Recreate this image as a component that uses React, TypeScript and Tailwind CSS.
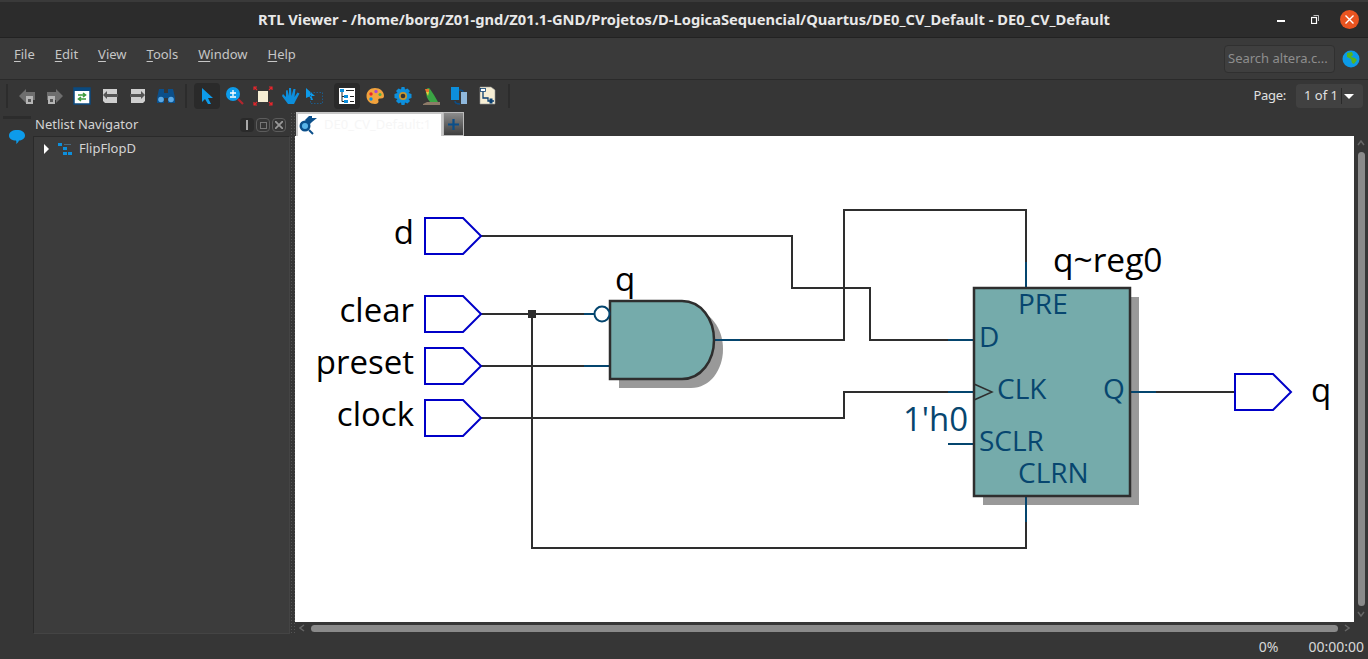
const uiFont = "font-['Noto_Sans','Open_Sans',sans-serif]";

function Menu({ first, rest }: { first: string; rest: string }) {
  return (
    <span>
      <span className="underline underline-offset-2">{first}</span>
      {rest}
    </span>
  );
}

function ToolIcon({ children, active }: { children: React.ReactNode; active?: boolean }) {
  return (
    <div className={`flex h-[26px] w-[26px] items-center justify-center rounded-sm ${active ? "bg-[#2a2a2a]" : ""}`}>
      <svg width="20" height="20" viewBox="0 0 20 20">
        {children}
      </svg>
    </div>
  );
}

function Separator() {
  return <div className="h-[24px] w-[2px] bg-[#2c2c2c]" />;
}

function Port({ x, y, label }: { x: number; y: number; label?: string }) {
  return (
    <g>
      <path d={`M${x} ${y - 18}H${x + 38}L${x + 56} ${y}L${x + 38} ${y + 18}H${x}Z`} fill="white" stroke="#0000c8" strokeWidth="2" />
      {label && (
        <text x={x - 11} y={y + 8} textAnchor="end" fontSize="33" fill="#000">
          {label}
        </text>
      )}
    </g>
  );
}

function Schematic() {
  const dark = "#2e2e2e";
  const blue = "#04456e";
  const fill = "#75abab";
  const pin = { fontSize: 28, fill: "#07466f" };
  return (
    <svg className="block" width="1059" height="486" viewBox="295 136 1059 486" fontFamily="'Open Sans','Noto Sans',sans-serif">
      <rect x="295" y="136" width="1059" height="486" fill="#fff" />

      <g fill="none" stroke={dark} strokeWidth="2">
        <path d="M481 236H792V288H870V340H948" />
        <path d="M481 314H584" />
        <path d="M481 366H584" />
        <path d="M532 314V548H1026V522" />
        <path d="M740 340H844V210H1026V262" />
        <path d="M481 418H844V392H948" />
        <path d="M1156 392H1235" />
      </g>
      <rect x="528" y="310" width="8" height="8" fill={dark} />

      <Port x={425} y={236} label="d" />
      <Port x={425} y={314} label="clear" />
      <Port x={425} y={366} label="preset" />
      <Port x={425} y={418} label="clock" />
      <Port x={1235} y={392} />
      <text x="1311" y="402" fontSize="33">q</text>

      {/* and gate */}
      <path d="M619 310H691C710 310 723 328 723 349C723 370 710 388 691 388H619Z" fill="#999" />
      <g fill="none" stroke={blue} strokeWidth="2">
        <path d="M584 314H594" />
        <path d="M584 366H610" />
        <path d="M714 340H740" />
      </g>
      <path d="M610 301H682C701 301 714 319 714 340C714 361 701 379 682 379H610Z" fill={fill} stroke={dark} strokeWidth="2.5" />
      <circle cx="602" cy="314" r="7.5" fill="#fff" stroke={blue} strokeWidth="2" />
      <text x="615" y="291" fontSize="33">q</text>

      {/* register */}
      <rect x="983" y="297" width="156" height="208" fill="#999" />
      <g fill="none" stroke={blue} strokeWidth="2">
        <path d="M1026 262V288" />
        <path d="M948 340H974" />
        <path d="M948 392H974" />
        <path d="M948 444H974" />
        <path d="M1026 496V522" />
        <path d="M1130 392H1156" />
      </g>
      <rect x="974" y="288" width="156" height="208" fill={fill} stroke={dark} strokeWidth="2.5" />
      <path d="M974 384L992 392L974 400" fill="none" stroke={dark} strokeWidth="1.5" />
      <text x="1053" y="272" fontSize="33.500">q~reg0</text>
      <text x="1018" y="314" {...pin}>PRE</text>
      <text x="979" y="347" {...pin}>D</text>
      <text x="997" y="399" {...pin}>CLK</text>
      <text x="1103" y="399" {...pin}>Q</text>
      <text x="903" y="431" fontSize="33" fill="#07466f">1'h0</text>
      <text x="979" y="451" {...pin}>SCLR</text>
      <text x="1018" y="483" {...pin}>CLRN</text>
    </svg>
  );
}

export default function App() {
  return (
    <div className={`flex h-[659px] w-[1368px] flex-col overflow-hidden bg-[#363636] text-[13px] text-[#d4d4d4] ${uiFont}`}>
      {/* title bar */}
      <div className="relative flex h-[38px] shrink-0 items-center justify-center border-t-2 border-b border-t-[#3a3a3a] border-b-[#222] bg-[#2c2c2c] text-[14.7px] font-bold text-[#e8e8e8]">
        RTL Viewer - /home/borg/Z01-gnd/Z01.1-GND/Projetos/D-LogicaSequencial/Quartus/DE0_CV_Default - DE0_CV_Default
        <div className="absolute right-[9px] top-[8px] flex items-center">
          <div className="mt-[3px] h-[2px] w-[8px] bg-white" />
          <svg className="ml-[26px]" width="8" height="9" viewBox="0 0 8 9" fill="none" stroke="white">
            <rect x="0.5" y="2.5" width="5" height="6" strokeWidth="1.2" />
            <path d="M2.5 .5H7.5V6" strokeWidth="1" opacity=".7" />
          </svg>
          <div className="ml-[21px] flex h-[19px] w-[19px] items-center justify-center rounded-full bg-[#e95420]">
            <svg width="9" height="9" viewBox="0 0 9 9" stroke="white" strokeWidth="1.4">
              <path d="M.5 .5L8.5 8.5M8.5 .5L.5 8.5" />
            </svg>
          </div>
        </div>
      </div>

      {/* menu bar */}
      <div className="flex h-[42px] shrink-0 items-center justify-between border-b border-[#2a2a2a] bg-[#3a3a3a] pl-[14px] pr-[8px]">
        <div className="mb-[7px] flex gap-[20px] text-[#c6c6c6]">
          <Menu first="F" rest="ile" />
          <Menu first="E" rest="dit" />
          <Menu first="V" rest="iew" />
          <Menu first="T" rest="ools" />
          <Menu first="W" rest="indow" />
          <Menu first="H" rest="elp" />
        </div>
        <div className="mt-px flex items-center gap-[7px]">
          <div className="flex h-[28px] w-[111px] items-center rounded-sm border border-[#303030] bg-[#3f3f3f] pl-[3px] text-[#8e8e8e]">Search altera.c...</div>
          <svg width="18" height="18" viewBox="0 0 18 18">
            <circle cx="9" cy="9" r="8.5" fill="#0c9be8" />
            <path d="M5 3L10 2L11 5L9 7L13 8L15 10L12 14L10 13L9 9L5 7Z" fill="#58b51f" />
          </svg>
        </div>
      </div>

      {/* toolbar */}
      <div className="flex h-[32px] shrink-0 items-center justify-between pl-[6px] pr-[5px]">
        <div className="flex items-center">
          <Separator />
          <div className="ml-[6px] flex items-center gap-[2px]">
            <div className="-mr-[1px]">
              <ToolIcon>
                <path d="M2 10L9 3V6H18V14H9V17Z" fill="#6e6e6e" />
                <rect x="9" y="10" width="7" height="8" fill="#b5b5b5" />
                <rect x="11" y="13" width="3" height="3" fill="#555" />
              </ToolIcon>
            </div>
            <ToolIcon>
              <path d="M19 10L12 3V6H3V14H12V17Z" fill="#6e6e6e" />
              <rect x="4" y="10" width="7" height="8" fill="#b5b5b5" />
              <rect x="6" y="13" width="3" height="3" fill="#555" />
            </ToolIcon>
            <ToolIcon>
              <rect x="2" y="2" width="16" height="16" fill="#fff" stroke="#0a4a80" strokeWidth="1.5" />
              <rect x="2" y="2" width="16" height="3" fill="#0a4a80" />
              <path d="M6 9H13M11 7L13.5 9L11 11M14 13H7M9 11L6.5 13L9 15" fill="none" stroke="#3c9a3c" strokeWidth="1.6" />
            </ToolIcon>
            <ToolIcon>
              <path d="M3 3H17V17H5L3 15Z" fill="#cfcfcf" />
              <path d="M18 8H7V5L3 9L7 13V11H18Z" fill="#555" />
            </ToolIcon>
            <ToolIcon>
              <path d="M3 3H17V15L15 17H3Z" fill="#cfcfcf" />
              <path d="M2 8H13V5L17 9L13 13V11H2Z" fill="#555" />
            </ToolIcon>
            <ToolIcon>
              <path d="M3 3H8V7H12V3H17L19 12V17H12V12H8V17H1V12Z" fill="#0b4f8a" />
              <circle cx="5" cy="13.500" r="2.800" fill="#5aa9e6" />
              <circle cx="15" cy="13.500" r="2.800" fill="#5aa9e6" />
            </ToolIcon>
          </div>
          <div className="ml-[6px] mr-[7px]"><Separator /></div>
          <div className="flex items-center gap-[2px]">
            <ToolIcon active>
              <path d="M5 2L16 12H11L14 18H11L8 13L5 16Z" fill="#0d9bea" />
            </ToolIcon>
            <ToolIcon>
              <circle cx="8" cy="8" r="7" fill="#0d9bea" />
              <path d="M5 7H11M8 4V10M5 11H11" stroke="#fff" strokeWidth="1.3" />
              <path d="M13 13L18 18" stroke="#b3262e" strokeWidth="2.2" />
            </ToolIcon>
            <ToolIcon>
              <rect x="5" y="5" width="10" height="11" fill="#f6eed4" />
              <path d="M1 4V1H4M1 1L4 4M16 1H19V4M19 1L16 4M19 16V19H16M19 19L16 16M4 19H1V16M1 19L4 16" fill="none" stroke="#e8262c" strokeWidth="1.2" />
            </ToolIcon>
            <ToolIcon>
              <path d="M2 8L5 11V4.500L6.500 4L8 10V2H10L10.500 10L12.500 3H14.500L13.500 11L16.500 6.500L18.500 7.500L15 14L13 18H7L1 10Z" fill="#0d8fdc" />
            </ToolIcon>
            <div className="-ml-[4px] mr-[4px]">
              <ToolIcon>
                <path d="M1 2L10 10H6.500L8 14H6L4.500 10.500L1 12Z" fill="#0d9bea" />
                <rect x="5.500" y="6.500" width="12" height="11" fill="none" stroke="#1a5a8a" strokeDasharray="1.500 1.500" />
              </ToolIcon>
            </div>
            <ToolIcon active>
              <rect x="2" y="2" width="16" height="16" fill="#fff" />
              <rect x="3" y="3" width="4" height="3" fill="#0d8fdc" />
              <rect x="7" y="9" width="4" height="3" fill="#0d8fdc" />
              <rect x="7" y="14" width="4" height="3" fill="#0d8fdc" />
              <path d="M5 6V15.500H7M5 10.500H7M9 4.500H17M13 10.500H17M13 15.500H17" fill="none" stroke="#222" />
            </ToolIcon>
            <ToolIcon>
              <path d="M10 2C15 2 19 5.500 19 10C19 12.500 16.500 12.500 15 12.500C13 12.500 13 14 13.500 15C14 16.500 12.500 18 10 18C5 18 1.500 14.500 1.500 10C1.500 5.500 5 2 10 2Z" fill="#f2a33c" />
              <circle cx="6" cy="8" r="1.700" fill="#e8262c" />
              <circle cx="11" cy="5.500" r="1.700" fill="#a84bd0" />
              <circle cx="15" cy="8.500" r="1.500" fill="#4ab04a" />
              <circle cx="6" cy="13" r="1.700" fill="#0d8fdc" />
            </ToolIcon>
            <ToolIcon>
              <path d="M8.500 1H11.500L12 3.500L14.500 2.500L17 5L15.500 7L18.500 8V12L15.500 13L17 15L14.500 17.500L12 16.500L11.500 19H8.500L8 16.500L5.500 17.500L3 15L4.500 13L1.500 12V8L4.500 7L3 5L5.500 2.500L8 3.500Z" fill="#0d8fdc" />
              <circle cx="10" cy="10" r="4" fill="#c7962f" />
              <circle cx="10" cy="10" r="2.300" fill="#333" />
            </ToolIcon>
            <ToolIcon>
              <path d="M2 18L6 16H19V19H2Z" fill="#8d7a68" />
              <path d="M5 5C5 2 8 1 9 3L13 9L17 16H9C6 13 5 9 5 5Z" fill="#3aa544" />
              <path d="M4 3H8V6H5Z" fill="#e8762c" />
              <path d="M5 6L8 6L7 10Z" fill="#e8c93c" />
            </ToolIcon>
            <ToolIcon>
              <rect x="2" y="1" width="8" height="13" fill="#0d8fdc" />
              <rect x="12" y="6" width="6" height="12" fill="#8fb8dc" />
              <path d="M10 4C13 4 14 5 14 6M6 15C6 18 9 18 11 18" fill="none" stroke="#0b4f8a" strokeWidth="1.500" />
            </ToolIcon>
            <ToolIcon>
              <path d="M3 1H14L18 4V18H3Z" fill="#f6eed4" stroke="#999" strokeWidth=".6" />
              <path d="M6 5V12H11V15H17M11 15V12" fill="none" stroke="#0b3f70" strokeWidth="1.300" />
              <rect x="3.500" y="2.500" width="5" height="3" fill="#fff" stroke="#0b3f70" strokeWidth=".8" />
              <rect x="12.500" y="12.500" width="3" height="5" fill="#0b3f70" />
            </ToolIcon>
          </div>
          <div className="ml-[8px]"><Separator /></div>
        </div>
        <div className="flex items-center gap-[10px] text-[#e0e0e0]">
          <span className="tracking-[-0.3px]">Page:</span>
          <div className="flex h-[24px] w-[67px] items-center rounded-sm bg-[#414141] pl-[8px]">
            <span className="w-[37px]">1 of 1</span>
            <div className="h-[16px] w-px bg-[#2a2a2a]" />
            <div className="ml-[2px] h-0 w-0 border-x-[5px] border-t-[5px] border-x-transparent border-t-white" />
          </div>
        </div>
      </div>

      {/* main area */}
      <div className="flex min-h-0 flex-1">
        <div className="relative flex w-[33px] shrink-0 flex-col items-center pt-[4px]">
          <div className="h-[3px] w-[28px] bg-[#2c2c2c]" />
          <svg className="mt-[11px]" width="16" height="14" viewBox="0 0 16 14">
            <path d="M8 0C12.500 0 16 2 16 5.500C16 9 12.500 10.500 10 10.500C9.500 12 8.500 13 7 14C7.500 12.500 7.500 11.500 7 10.500C3 10.500 0 9 0 5.500C0 2 3.500 0 8 0Z" fill="#0d9bea" />
          </svg>
        </div>

        <div className="flex w-[257px] shrink-0 flex-col">
          <div className="flex h-[24px] shrink-0 items-center justify-between pl-[2px] pr-[4px] pt-[2px]">
            <span>Netlist Navigator</span>
            <div className="flex items-center gap-[2px]">
              <div className="flex h-[14px] w-[14px] items-center justify-center rounded-sm bg-[#2a2a2a]">
                <div className="h-[10px] w-[2px] bg-[#a8a8a8]" />
              </div>
              <div className="flex h-[14px] w-[14px] items-center justify-center rounded-sm border border-[#5c5c5c]">
                <div className="h-[7px] w-[7px] border border-[#777]" />
              </div>
              <div className="flex h-[14px] w-[14px] items-center justify-center rounded-sm border border-[#5c5c5c]">
                <svg width="8" height="8" viewBox="0 0 8 8" stroke="#999" strokeWidth="1.800">
                  <path d="M0 0L8 8M8 0L0 8" />
                </svg>
              </div>
            </div>
          </div>
          <div className="h-[498px] border-l border-t border-b border-r border-[#2a2a2a] border-b-[#444] border-r-[#444] bg-[#3c3c3c] pt-[3px]">
            <div className="flex h-[18px] items-center pl-[10px]">
              <div className="h-0 w-0 border-y-[5px] border-l-[5px] border-y-transparent border-l-white" />
              <svg className="ml-[9px]" width="14" height="12" viewBox="0 0 14 12" fill="#0d8fdc">
                <rect x="0" y="0" width="4" height="3" />
                <rect x="5" y="4" width="4" height="3" />
                <rect x="5" y="9" width="4" height="3" />
                <rect x="10" y="9" width="4" height="3" />
                <rect x="6" y="1" width="7" height="1" fill="#4a6a80" />
              </svg>
              <span className="ml-[7px]">FlipFlopD</span>
            </div>
          </div>
        </div>

        <div className="w-[5px] shrink-0 self-stretch bg-[radial-gradient(#555_1px,transparent_1px)] bg-[length:3px_3px]" />

        <div className="flex min-w-0 flex-1 flex-col">
          <div className="flex h-[24px] shrink-0 items-end">
            <div className="ml-px flex h-[24px] w-[147px] items-center border-2 border-b-0 border-[#c8c8c8] bg-white pl-[1px]">
              <svg width="18" height="20" viewBox="0 0 18 20">
                <path d="M6 5L10 1H13V3H18L13 7L11 9L8 8Z" fill="#0b4f8a" />
                <circle cx="6" cy="11" r="5.500" fill="#0b4f8a" />
                <circle cx="6" cy="11" r="3" fill="#58b4e8" />
                <path d="M10 15L14 19" stroke="#0b4f8a" strokeWidth="2" />
              </svg>
              <span className="ml-[7px] whitespace-nowrap text-[13px] text-[#f6f6f6]">DE0_CV_Default:1</span>
            </div>
            <div className="flex h-[24px] w-[21px] items-center justify-center border border-[#bbb] bg-gradient-to-b from-[#8c8c8c] to-[#3e3e3e]">
              <svg width="11" height="11" viewBox="0 0 11 11" stroke="#0b4f8a" strokeWidth="2.200">
                <path d="M5.500 0V11M0 5.500H11" />
              </svg>
            </div>
          </div>

          <div className="flex min-h-0 flex-1">
            <div className="flex min-w-0 flex-1 flex-col">
              <Schematic />
              <div className="flex h-[12px] items-center pl-[4px]">
                <svg width="6" height="8" viewBox="0 0 6 8" fill="none" stroke="#666" strokeWidth="1.500">
                  <path d="M5 1L1 4L5 7" />
                </svg>
                <div className="ml-[6px] h-[7px] w-[1027px] rounded-full bg-[#8a8a8a]" />
                <svg className="ml-[6px]" width="6" height="8" viewBox="0 0 6 8" fill="none" stroke="#666" strokeWidth="1.500">
                  <path d="M1 1L5 4L1 7" />
                </svg>
              </div>
            </div>
            <div className="flex h-[486px] w-[14px] shrink-0 flex-col items-center pt-[4px]">
              <svg width="8" height="6" viewBox="0 0 8 6" fill="none" stroke="#666" strokeWidth="1.500">
                <path d="M1 5L4 1L7 5" />
              </svg>
              <div className="mt-[6px] h-[454px] w-[7px] rounded-full bg-[#8a8a8a]" />
              <svg className="mt-[5px]" width="8" height="6" viewBox="0 0 8 6" fill="none" stroke="#666" strokeWidth="1.500">
                <path d="M1 1L4 5L7 1" />
              </svg>
            </div>
          </div>
        </div>
      </div>

      {/* status bar */}
      <div className="flex h-[25px] shrink-0 items-center justify-end gap-[30px] pr-[4px] text-[14px] text-[#d8d8d8]">
        <span>0%</span>
        <span>00:00:00</span>
      </div>
    </div>
  );
}
